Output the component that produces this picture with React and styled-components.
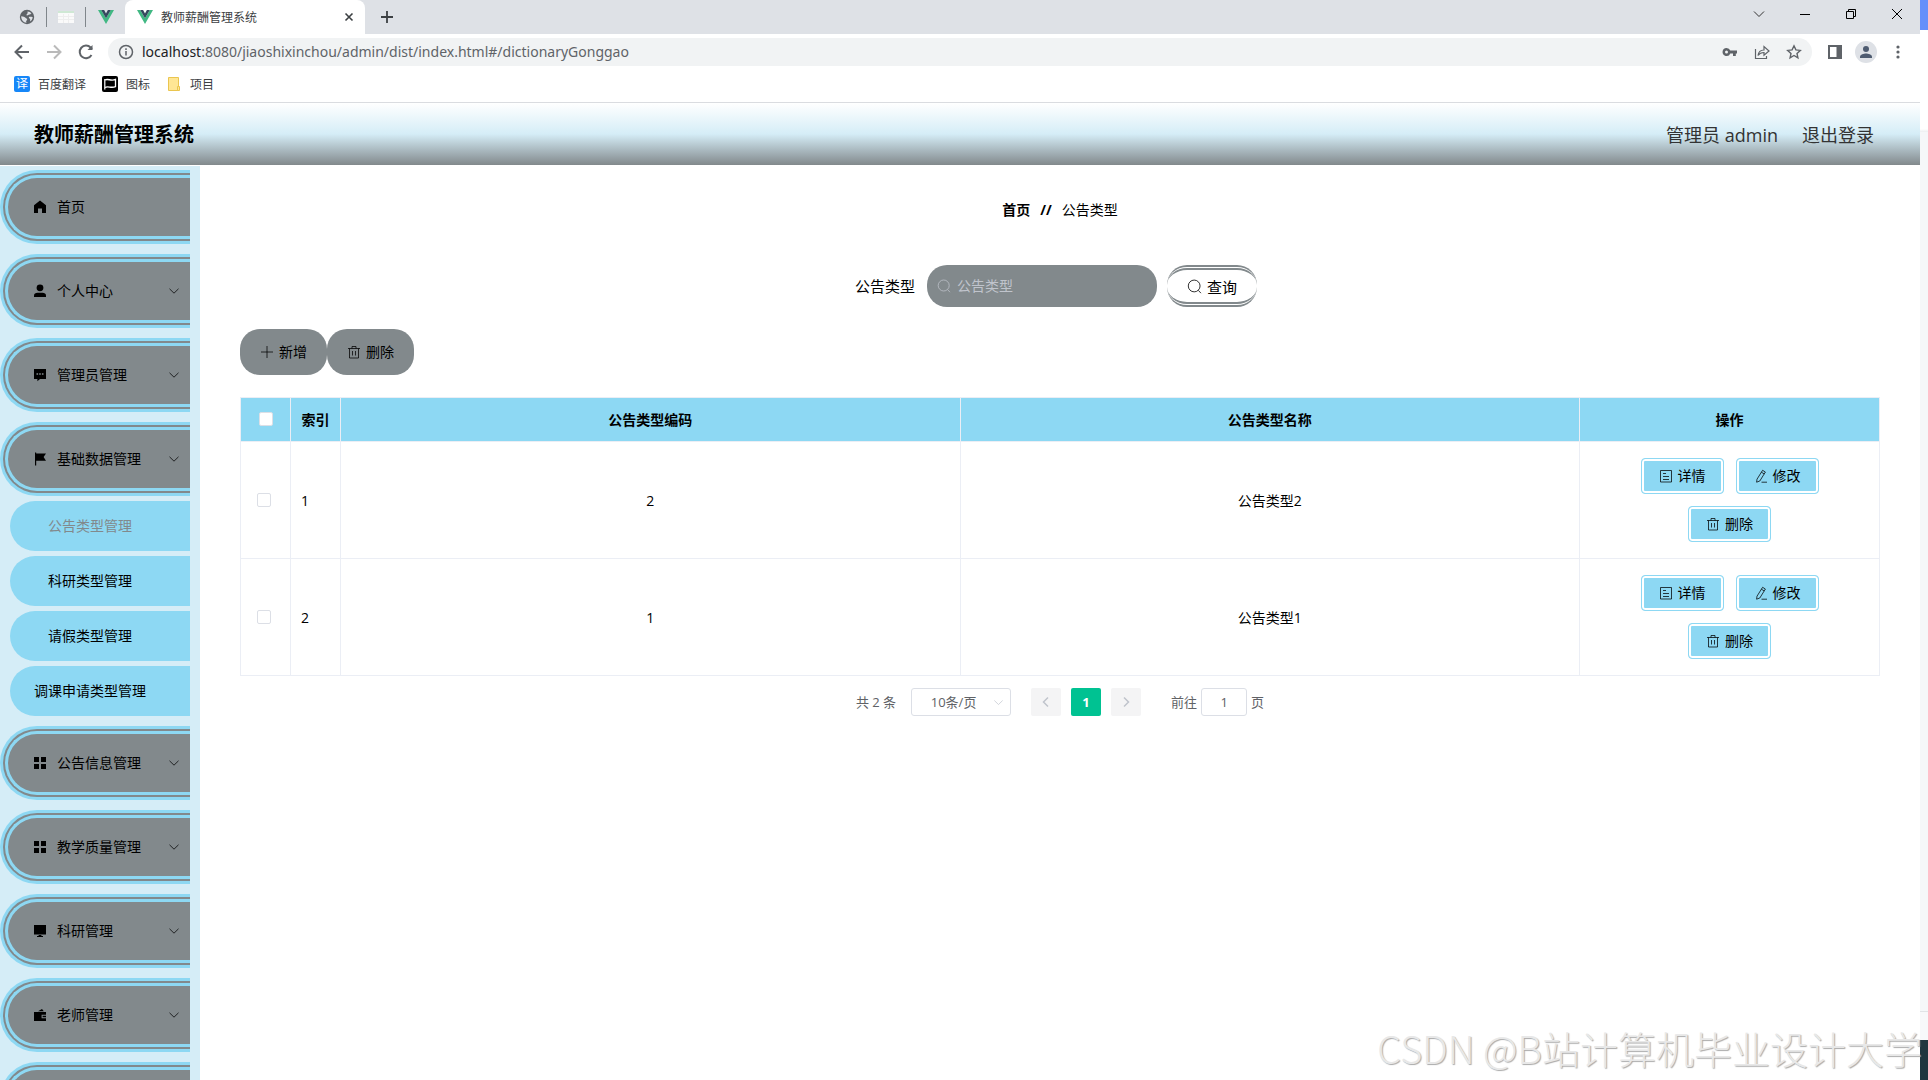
import { useState } from "react";
import styled, { createGlobalStyle } from "styled-components";

const menuTop = [
  { icon: "home", label: "首页" },
  { icon: "user", label: "个人中心", more: true },
  { icon: "chat", label: "管理员管理", more: true },
  { icon: "flag", label: "基础数据管理", more: true },
];

const subMenu = ["公告类型管理", "科研类型管理", "请假类型管理", "调课申请类型管理"];

const menuBottom = [
  { icon: "grid", label: "公告信息管理", more: true },
  { icon: "grid", label: "教学质量管理", more: true },
  { icon: "monitor", label: "科研管理", more: true },
  { icon: "wallet", label: "老师管理", more: true },
  { icon: "grid", label: "", more: true },
];

const rows = [
  { id: 1, code: "2", name: "公告类型2" },
  { id: 2, code: "1", name: "公告类型1" },
];

const solidIcons = {
  home: <path d="M7 .6 1 5.2V13h4V8.6h4V13h4V5.2z" />,
  user: (
    <>
      <circle cx="7" cy="3.8" r="3.4" />
      <path d="M1 13v-1.4C1 9.8 2.6 8.8 4.4 8.8h5.2c1.8 0 3.4 1 3.4 2.8V13z" />
    </>
  ),
  chat: (
    <path
      fillRule="evenodd"
      d="M1 1h12v10H7l-2.6 2.2V11H1zM3.5 5.2v1.6h1.6V5.2zm2.7 0v1.6h1.6V5.2zm2.7 0v1.6h1.6V5.2z"
    />
  ),
  flag: <path d="M2 .5h1.2V1.4H13L10.6 5 13 8.7H3.2v4.8H2z" />,
  grid: <path d="M1 1h5v5H1zM8 1h5v5H8zM1 8h5v5H1zM8 8h5v5H8z" />,
  monitor: <path d="M1 1h12v9.4H1zM5.6 11h2.8v1H10v1H4v-1h1.6z" />,
  wallet: (
    <path
      fillRule="evenodd"
      d="M1 4h12v2.8H8.6v3.4H13V13H1zM5 3.2 9 1l1.8 2.2zM9.6 7.8H13v1.4H9.6z"
    />
  ),
};

const lineIcons = {
  search: (
    <>
      <circle cx="6.7" cy="6.5" r="5.5" />
      <path d="m10.6 10.6 2.4 2.6" />
    </>
  ),
  plus: <path d="M7 1v12M1 7h12" />,
  trash: <path d="M1 3.5h12M5 3.5v-2h4v2M2.5 3.5v9.5h9V3.5M5.5 6v4.5M8.5 6v4.5" />,
  doc: <path d="M1.500 1.500h11v11.500h-11zM4 4.500h3M4 7.500h6M4 10.500h6" />,
  edit: <path d="M8.600 1.300 11.400 3 5.800 12 2.600 13.200 3 10.200zM7.400 3.200l2.800 1.700M7.500 13.200H13" />,
  down: <path d="m2.500 4.800 4.500 4.400 4.500-4.400" />,
};

const Solid = ({ name }) => (
  <Glyph viewBox="0 0 14 14" fill="currentColor" aria-hidden="true">
    {solidIcons[name]}
  </Glyph>
);

const Line = ({ name }) => (
  <Glyph viewBox="0 0 14 14" fill="none" stroke="currentColor" strokeWidth="0.75" aria-hidden="true">
    {lineIcons[name]}
  </Glyph>
);

const VueLogo = () => (
  <svg width="16" height="14" viewBox="0 0 16 14" aria-hidden="true">
    <path fill="#41b883" d="M0 0h3.2L8 8.3 12.8 0H16L8 14z" />
    <path fill="#35495e" d="M3.2 0h2.9L8 3.4 9.9 0h2.9L8 8.3z" />
  </svg>
);

const MenuItem = ({ item }) => (
  <MenuButton type="button">
    <Solid name={item.icon} />
    <span>{item.label}</span>
    {item.more && <Line name="down" />}
  </MenuButton>
);

const Browser = () => (
  <div>
    <TabStrip>
      <PinnedTab $line>
        <svg width="16" height="16" viewBox="0 0 16 16" aria-hidden="true">
          <circle cx="8" cy="8" r="7.2" fill="#5f6368" />
          <path
            fill="#dee1e6"
            d="M2.2 7.2c2 .2 3.600.5 4.300 1.600.6.900 1.700.7 1.700 1.700 0 .9-1 .9-1.100 1.700 0 .5.4.8.4 1.500-3.200-.2-5.400-3-5.300-6.500zM8.500 2.400c1.700 0 3.100.900 4 2-.9.300-1.300 1.200-2.300 1.200-.900 0-1.300.9-2.200.8-.8-.2-.5-1.200.1-1.500.5-.4.7-1.200.4-2.500zM10 8c1.200-.5 2.300.1 3.700 0-.1 2-1.200 3.600-2.600 4.600 0-1.100.400-1.800-.1-2.500S9.300 8.400 10 8z"
          />
        </svg>
      </PinnedTab>
      <PinnedTab $line>
        <svg width="16" height="12" viewBox="0 0 16 12" aria-hidden="true">
          <path fill="#fafafa" d="M0 0h16v12H0z" />
          <path fill="#cfe8d4" d="M0 0h16v2H0z" />
          <path stroke="#eeeeee" d="M0 5.5h16M0 8.5h16M5.5 3v9M10.5 3v9" />
        </svg>
      </PinnedTab>
      <PinnedTab>
        <VueLogo />
      </PinnedTab>
      <ActiveTab>
        <VueLogo />
        <span>教师薪酬管理系统</span>
        <ChromeButton type="button" aria-label="关闭标签页">
          <svg width="16" height="16" viewBox="0 0 16 16" stroke="#3c4043" strokeWidth="1.6">
            <path d="m4.5 4.5 7 7m0-7-7 7" />
          </svg>
        </ChromeButton>
      </ActiveTab>
      <ChromeButton type="button" aria-label="新标签页" $wide>
        <svg width="16" height="16" viewBox="0 0 16 16" stroke="#3c4043" strokeWidth="1.8">
          <path d="M8 2v12M2 8h12" />
        </svg>
      </ChromeButton>
      <WindowButtons>
        <ChromeButton type="button" aria-label="搜索标签页">
          <svg width="12" height="12" viewBox="0 0 12 12" fill="none" stroke="#333">
            <path d="m1 3.5 5 5 5-5" />
          </svg>
        </ChromeButton>
        <ChromeButton type="button" aria-label="最小化">
          <svg width="12" height="12" viewBox="0 0 12 12" stroke="#000">
            <path d="M1 6.5h10" />
          </svg>
        </ChromeButton>
        <ChromeButton type="button" aria-label="还原">
          <svg width="12" height="12" viewBox="0 0 12 12" fill="none" stroke="#000">
            <path d="M1.5 3.5h7v7h-7zM3.5 3.5v-2h7v7h-2" />
          </svg>
        </ChromeButton>
        <ChromeButton type="button" aria-label="关闭">
          <svg width="12" height="12" viewBox="0 0 12 12" stroke="#000">
            <path d="m1 1 10 10M11 1 1 11" />
          </svg>
        </ChromeButton>
      </WindowButtons>
    </TabStrip>
    <AddressRow>
      <NavIcon viewBox="0 0 16 16">
        <path d="M15 8H2M8 1.5 1.5 8 8 14.5" />
      </NavIcon>
      <NavIcon viewBox="0 0 16 16" $faded>
        <path d="M1 8h13M8 1.5 14.5 8 8 14.5" />
      </NavIcon>
      <NavIcon viewBox="0 0 16 16">
        <path d="M13.5 11A6.300 6.300 0 1 1 12.600 3.500L14 5" />
        <path d="M14.5 1v5h-5z" fill="#5f6368" stroke="none" />
      </NavIcon>
      <AddressBar>
        <svg width="16" height="16" viewBox="0 0 16 16" fill="none" stroke="#5f6368" strokeWidth="1.5">
          <circle cx="8" cy="8" r="6.5" />
          <path d="M8 7v4.5M8 4.3v1.6" />
        </svg>
        <Url>
          <b>localhost</b>:8080/jiaoshixinchou/admin/dist/index.html#/dictionaryGonggao
        </Url>
        <svg width="16" height="16" viewBox="0 0 16 16" fill="#5f6368">
          <path
            fillRule="evenodd"
            d="M4.500 4a4 4 0 0 1 3.800 2.600H15v2.800h-1.200V12H11V9.400H8.300A4 4 0 1 1 4.500 4zm0 2.500a1.500 1.500 0 1 0 0 3 1.500 1.500 0 0 0 0-3z"
          />
        </svg>
        <svg width="16" height="16" viewBox="0 0 16 16" fill="none" stroke="#5f6368" strokeWidth="1.2">
          <path d="M1.5 5v9.5h11V12M4 11.500c.5-4 3-5.500 6-5.500V2.500L15 7l-5 4.200V8.500c-2.500 0-4.500.8-6 3z" />
        </svg>
        <svg width="16" height="16" viewBox="0 0 16 16" fill="none" stroke="#5f6368" strokeWidth="1.4">
          <path d="m8 1.800 1.900 4.100 4.400.5L11 9.400l.9 4.400L8 11.500l-3.900 2.300L5 9.400l-3.300-3 4.400-.5z" />
        </svg>
      </AddressBar>
      <ToolbarEnd>
        <svg width="14" height="14" viewBox="0 0 14 14" fill="none" stroke="#5f6368" strokeWidth="2">
          <path d="M1 1h12v12H1z" />
          <path d="M9.5 1H13v12H9.5z" fill="#5f6368" />
        </svg>
        <Avatar>
          <svg width="14" height="14" viewBox="0 0 14 14" fill="#4e5b70">
            <circle cx="7" cy="4" r="3" />
            <path d="M1 13v-1.5C1 9.5 5 8.400 7 8.400s6 1.100 6 3.100V13z" />
          </svg>
        </Avatar>
        <svg width="16" height="16" viewBox="0 0 16 16" fill="#5f6368">
          <circle cx="8" cy="3" r="1.6" />
          <circle cx="8" cy="8" r="1.6" />
          <circle cx="8" cy="13" r="1.6" />
        </svg>
      </ToolbarEnd>
    </AddressRow>
    <Bookmarks>
      <a href="#fanyi">
        <Badge>译</Badge>
        百度翻译
      </a>
      <a href="#icons">
        <svg width="16" height="16" viewBox="0 0 16 16">
          <rect width="16" height="16" rx="2" fill="#000" />
          <path d="M2.8 3v10.5" stroke="#fff" strokeWidth="1.2" />
          <path d="M3 4c3-1.800 6 1.500 10.500-.6v7.200C9 12.600 6 9.500 3 11.500" fill="none" stroke="#fff" strokeWidth="1.3" />
        </svg>
        图标
      </a>
      <a href="#projects">
        <svg width="16" height="16" viewBox="0 0 16 16">
          <path d="M2.5 1.5h10v13h-10z" fill="#ffe694" stroke="#eac54f" />
          <path d="M11.5 10.5h2v4h-2z" fill="#ffe694" stroke="#eac54f" />
        </svg>
        项目
      </a>
    </Bookmarks>
  </div>
);

const App = () => {
  const [active, setActive] = useState(subMenu[0]);

  return (
    <Desktop>
      <GlobalStyle />
      <Window>
        <Browser />
        <Header>
          <h1>教师薪酬管理系统</h1>
          <span>管理员 admin</span>
          <button type="button">退出登录</button>
        </Header>
        <Body>
          <Sidebar>
            {menuTop.map((item) => (
              <MenuItem key={item.label} item={item} />
            ))}
            <SubMenu>
              {subMenu.map((label) => (
                <SubLink
                  key={label}
                  href="#/dictionaryGonggao"
                  $active={label === active}
                  onClick={() => setActive(label)}
                >
                  {label}
                </SubLink>
              ))}
            </SubMenu>
            {menuBottom.map((item) => (
              <MenuItem key={item.label} item={item} />
            ))}
          </Sidebar>
          <Main>
            <Crumbs>
              <b>首页</b>
              <b>//</b>
              <span>公告类型</span>
            </Crumbs>
            <SearchForm onSubmit={(e) => e.preventDefault()}>
              <label htmlFor="type">公告类型</label>
              <SearchBox>
                <Line name="search" />
                <input id="type" placeholder="公告类型" />
              </SearchBox>
              <QueryButton type="submit">
                <Line name="search" />
                查询
              </QueryButton>
            </SearchForm>
            <Tools>
              <ToolButton type="button">
                <Line name="plus" />
                <span>新增</span>
              </ToolButton>
              <ToolButton type="button">
                <Line name="trash" />
                <span>删除</span>
              </ToolButton>
            </Tools>
            <Table>
              <colgroup>
                <col width="50" />
                <col width="50" />
                <col />
                <col />
                <col width="300" />
              </colgroup>
              <thead>
                <tr>
                  <th>
                    <Check type="checkbox" aria-label="全选" $head />
                  </th>
                  <th>索引</th>
                  <th>公告类型编码</th>
                  <th>公告类型名称</th>
                  <th>操作</th>
                </tr>
              </thead>
              <tbody>
                {rows.map((row) => (
                  <tr key={row.id}>
                    <td>
                      <Check type="checkbox" aria-label={`选择 ${row.name}`} />
                    </td>
                    <IndexCell>{row.id}</IndexCell>
                    <td>{row.code}</td>
                    <td>{row.name}</td>
                    <td>
                      <Actions>
                        <ActionButton type="button">
                          <Line name="doc" />
                          <span>详情</span>
                        </ActionButton>
                        <ActionButton type="button">
                          <Line name="edit" />
                          <span>修改</span>
                        </ActionButton>
                        <ActionButton type="button">
                          <Line name="trash" />
                          <span>删除</span>
                        </ActionButton>
                      </Actions>
                    </td>
                  </tr>
                ))}
              </tbody>
            </Table>
            <Pagination>
              <span>共 2 条</span>
              <SizeBox>
                <select aria-label="每页条数" defaultValue="10">
                  <option value="10">10条/页</option>
                  <option value="20">20条/页</option>
                </select>
                <Line name="down" />
              </SizeBox>
              <Pager>
                <PageButton type="button" aria-label="上一页" disabled>
                  <svg width="12" height="12" viewBox="0 0 12 12" fill="none" stroke="currentColor" strokeWidth="1.5">
                    <path d="M8 1.5 3.5 6 8 10.5" />
                  </svg>
                </PageButton>
                <PageButton type="button" $current>
                  1
                </PageButton>
                <PageButton type="button" aria-label="下一页" disabled>
                  <svg width="12" height="12" viewBox="0 0 12 12" fill="none" stroke="currentColor" strokeWidth="1.5">
                    <path d="M4 1.5 8.5 6 4 10.5" />
                  </svg>
                </PageButton>
              </Pager>
              <Jump>
                前往
                <input defaultValue="1" />
                页
              </Jump>
            </Pagination>
          </Main>
        </Body>
      </Window>
      <Behind>
        <BehindTop />
        <BehindBar />
        <BehindPage />
        <BehindLine />
        <BehindDark />
      </Behind>
      <Watermark>CSDN @B站计算机毕业设计大学</Watermark>
    </Desktop>
  );
};

export default App;

const GlobalStyle = createGlobalStyle`
  * {
    box-sizing: border-box;
  }
  body {
    margin: 0;
    overflow: hidden;
  }
  body, button, input, select {
    font-family: "Open Sans", "Noto Sans CJK SC", sans-serif;
    font-size: 14px;
    color: #000;
  }
  button {
    padding: 0;
    border: 0;
    background: none;
    cursor: pointer;
  }
  a {
    color: inherit;
    text-decoration: none;
  }
`;

const Desktop = styled.div`
  position: relative;
  display: grid;
  grid-template-columns: 1fr 8px;
  height: 100vh;
  overflow: hidden;
`;

const Window = styled.div`
  display: flex;
  flex-direction: column;
  min-width: 0;
  min-height: 0;
  background: #fff;
`;

const Glyph = styled.svg`
  width: 1em;
  height: 1em;
  flex: none;
`;

const TabStrip = styled.div`
  display: flex;
  align-items: center;
  height: 34px;
  padding-left: 8px;
  background: #dee1e6;
`;

const PinnedTab = styled.div`
  display: flex;
  align-items: center;
  justify-content: center;
  width: 39px;
  height: 20px;
  border-right: ${({ $line }) => ($line ? "1px solid #80868b" : "0")};
`;

const ActiveTab = styled.div`
  display: flex;
  align-items: center;
  gap: 8px;
  width: 240px;
  height: 34px;
  padding: 0 8px 0 12px;
  border-radius: 8px 8px 0 0;
  background: #fff;
  font-size: 12px;
  color: #3c4043;
  span {
    flex: 1;
  }
`;

const ChromeButton = styled.button`
  display: flex;
  align-items: center;
  justify-content: center;
  width: ${({ $wide }) => ($wide ? "44px" : "16px")};
  height: 16px;
`;

const WindowButtons = styled.div`
  display: flex;
  gap: 30px;
  height: 28px;
  margin-left: auto;
  padding: 6px 15px 0 0;
  align-self: flex-start;
`;

const AddressRow = styled.div`
  display: flex;
  align-items: center;
  gap: 16px;
  height: 36px;
  padding: 0 14px;
`;

const NavIcon = styled.svg`
  width: 16px;
  height: 16px;
  fill: none;
  stroke: ${({ $faded }) => ($faded ? "#bababa" : "#5f6368")};
  stroke-width: 2;
`;

const AddressBar = styled.div`
  display: flex;
  flex: 1;
  align-items: center;
  gap: 16px;
  height: 28px;
  margin-left: -2px;
  padding: 0 10px;
  border-radius: 14px;
  background: #f1f3f4;
`;

const Url = styled.span`
  flex: 1;
  margin-left: -8px;
  padding-bottom: 2px;
  font-family: "Noto Sans", sans-serif;
  color: #5f6368;
  b {
    font-weight: 400;
    color: #202124;
  }
`;

const ToolbarEnd = styled.div`
  display: flex;
  align-items: center;
  gap: 13px;
`;

const Avatar = styled.div`
  display: flex;
  align-items: center;
  justify-content: center;
  width: 22px;
  height: 22px;
  border-radius: 50%;
  background: #dee1e6;
`;

const Bookmarks = styled.nav`
  display: flex;
  gap: 16px;
  height: 33px;
  padding: 0 14px 4px;
  border-bottom: 1px solid #dadce0;
  font-size: 12px;
  color: #3c4043;
  a {
    display: flex;
    align-items: center;
    gap: 8px;
  }
`;

const Badge = styled.span`
  width: 16px;
  height: 16px;
  border-radius: 2px;
  background: #1687f8;
  color: #fff;
  font-size: 12px;
  line-height: 16px;
  text-align: center;
`;

const Header = styled.header`
  display: flex;
  flex: none;
  align-items: center;
  gap: 24px;
  height: 62px;
  padding: 0 46px 1px 34px;
  background: linear-gradient(#fff, #d5edf7 50%, #82898c);
  font-size: 18px;
  color: #333;
  h1 {
    margin: 0 auto 0 0;
    font-size: 20px;
    color: #000;
  }
  button {
    font-size: 18px;
    color: #333;
  }
`;

const Body = styled.div`
  display: flex;
  flex: 1;
  min-height: 0;
  padding-top: 1px;
`;

const Sidebar = styled.aside`
  flex: none;
  width: 200px;
  padding: 4px 10px 0 0;
  overflow: hidden;
  background: #d5edf7;
`;

const MenuButton = styled.button`
  display: flex;
  align-items: center;
  gap: 10px;
  width: 100%;
  height: 74px;
  margin-bottom: 10px;
  padding: 0 9px 0 25px;
  border: 8px double #8dd8f3;
  border-right: 0;
  border-radius: 40px 0 0 40px;
  background: #82898c;
  span {
    flex: 1;
    padding-bottom: 2px;
    text-align: left;
  }
`;

const SubMenu = styled.div`
  display: grid;
  gap: 5px;
  margin: -5px 0 10px;
`;

const SubLink = styled.a`
  margin-left: 10px;
  padding-right: 20px;
  border-radius: 25px 0 0 25px;
  background: #8dd8f3;
  color: ${({ $active }) => ($active ? "#82898c" : "#000")};
  line-height: 50px;
  text-align: center;
`;

const Main = styled.main`
  flex: 1;
  min-width: 0;
  padding: 34px 40px 0;
`;

const Crumbs = styled.nav`
  display: flex;
  justify-content: center;
  gap: 10px;
  line-height: 20px;
`;

const SearchForm = styled.form`
  display: flex;
  align-items: center;
  justify-content: center;
  gap: 10px;
  height: 42px;
  margin-top: 45px;
  padding-right: 8px;
  font-size: 15px;
  label {
    padding: 0 2px 2px 0;
  }
`;

const SearchBox = styled.div`
  display: flex;
  align-items: center;
  gap: 6px;
  width: 230px;
  height: 42px;
  padding: 0 10px;
  border-radius: 20px;
  background: #82898c;
  font-size: 14px;
  color: #c0c4cc;
  input {
    flex: 1;
    min-width: 0;
    padding: 0 0 2px;
    border: 0;
    outline: 0;
    background: none;
  }
  input::placeholder {
    color: #c0c4cc;
  }
`;

const QueryButton = styled.button`
  display: flex;
  align-items: center;
  gap: 5px;
  height: 42px;
  padding: 0 20px;
  border: double #82898c;
  border-width: 5px 0;
  border-radius: 20px;
  font-size: 15px;
`;

const Tools = styled.div`
  display: flex;
  margin: 22px 0;
`;

const ToolButton = styled.button`
  display: flex;
  align-items: center;
  gap: 5px;
  height: 46px;
  padding: 0 20px;
  border-radius: 20px;
  background: #82898c;
  span {
    padding-bottom: 2px;
  }
`;

const Table = styled.table`
  width: 100%;
  table-layout: fixed;
  border-spacing: 0;
  border: solid #ebeef5;
  border-width: 1px 0 0 1px;
  th,
  td {
    padding: 0;
    border: solid #ebeef5;
    border-width: 0 1px 1px 0;
    text-align: center;
  }
  th {
    height: 44px;
    padding-bottom: 1px;
    background: #8dd8f3;
  }
`;

const IndexCell = styled.td`
  && {
    padding-left: 10px;
    text-align: left;
  }
`;

const Check = styled.input`
  appearance: none;
  display: block;
  width: 14px;
  height: 14px;
  margin: 0 auto 0 ${({ $head }) => ($head ? "18px" : "16px")};
  border: 1px solid #dcdfe6;
  border-radius: 2px;
  background: #fff;
`;

const Actions = styled.div`
  display: flex;
  flex-wrap: wrap;
  justify-content: center;
  gap: 12px;
  padding: 16px 40px;
`;

const ActionButton = styled.button`
  display: flex;
  align-items: center;
  gap: 5px;
  height: 36px;
  padding: 0 17px;
  border: 1px solid #8dd8f3;
  border-radius: 4px;
  background: #8dd8f3;
  box-shadow: inset 0 0 0 2px #fff;
  span {
    padding-bottom: 2px;
  }
`;

const Pagination = styled.div`
  display: flex;
  justify-content: center;
  margin-top: 12px;
  font-size: 13px;
  line-height: 28px;
  color: #606266;
`;

const SizeBox = styled.div`
  display: flex;
  align-items: center;
  width: 100px;
  height: 28px;
  margin: 0 20px 0 15px;
  padding: 0 5px 0 3px;
  border: 1px solid #dcdfe6;
  border-radius: 3px;
  color: #c0c4cc;
  select {
    flex: 1;
    min-width: 0;
    padding: 0;
    appearance: none;
    border: 0;
    background: none;
    font-size: 13px;
    color: #606266;
    text-align-last: center;
  }
`;

const Pager = styled.div`
  display: flex;
  gap: 10px;
`;

const PageButton = styled.button`
  display: flex;
  align-items: center;
  justify-content: center;
  width: 30px;
  height: 28px;
  border-radius: 2px;
  background: ${({ $current }) => ($current ? "#00c292" : "#f4f4f5")};
  color: ${({ $current }) => ($current ? "#fff" : "#c0c4cc")};
  font-size: 13px;
  font-weight: 700;
`;

const Jump = styled.label`
  display: flex;
  gap: 4px;
  margin-left: 30px;
  input {
    width: 46px;
    height: 28px;
    padding: 0;
    border: 1px solid #dcdfe6;
    border-radius: 3px;
    font-size: 13px;
    color: #606266;
    text-align: center;
  }
`;

// strip of the window lying behind the browser
const Behind = styled.div`
  display: flex;
  flex-direction: column;
`;

const BehindTop = styled.div`
  height: 30px;
  background: #658ffb;
`;

const BehindBar = styled.div`
  height: 102px;
  background: linear-gradient(#fff 97%, #eceef0);
`;

const BehindPage = styled.div`
  flex: 1;
  background: #f5f7f9;
`;

const BehindLine = styled.div`
  height: 29px;
  border-top: 1px solid #e0e3e6;
  background: #f7f8fa;
`;

const BehindDark = styled.div`
  height: 40px;
  background: #20363f;
`;

const Watermark = styled.div`
  position: absolute;
  right: 6px;
  bottom: 4px;
  color: #e8e8e8;
  font-family: "Noto Sans CJK SC", sans-serif;
  font-size: 38px;
  font-weight: 300;
  line-height: 56px;
  text-shadow: 1px 1px 1px #aaa;
  white-space: nowrap;
  pointer-events: none;
`;
